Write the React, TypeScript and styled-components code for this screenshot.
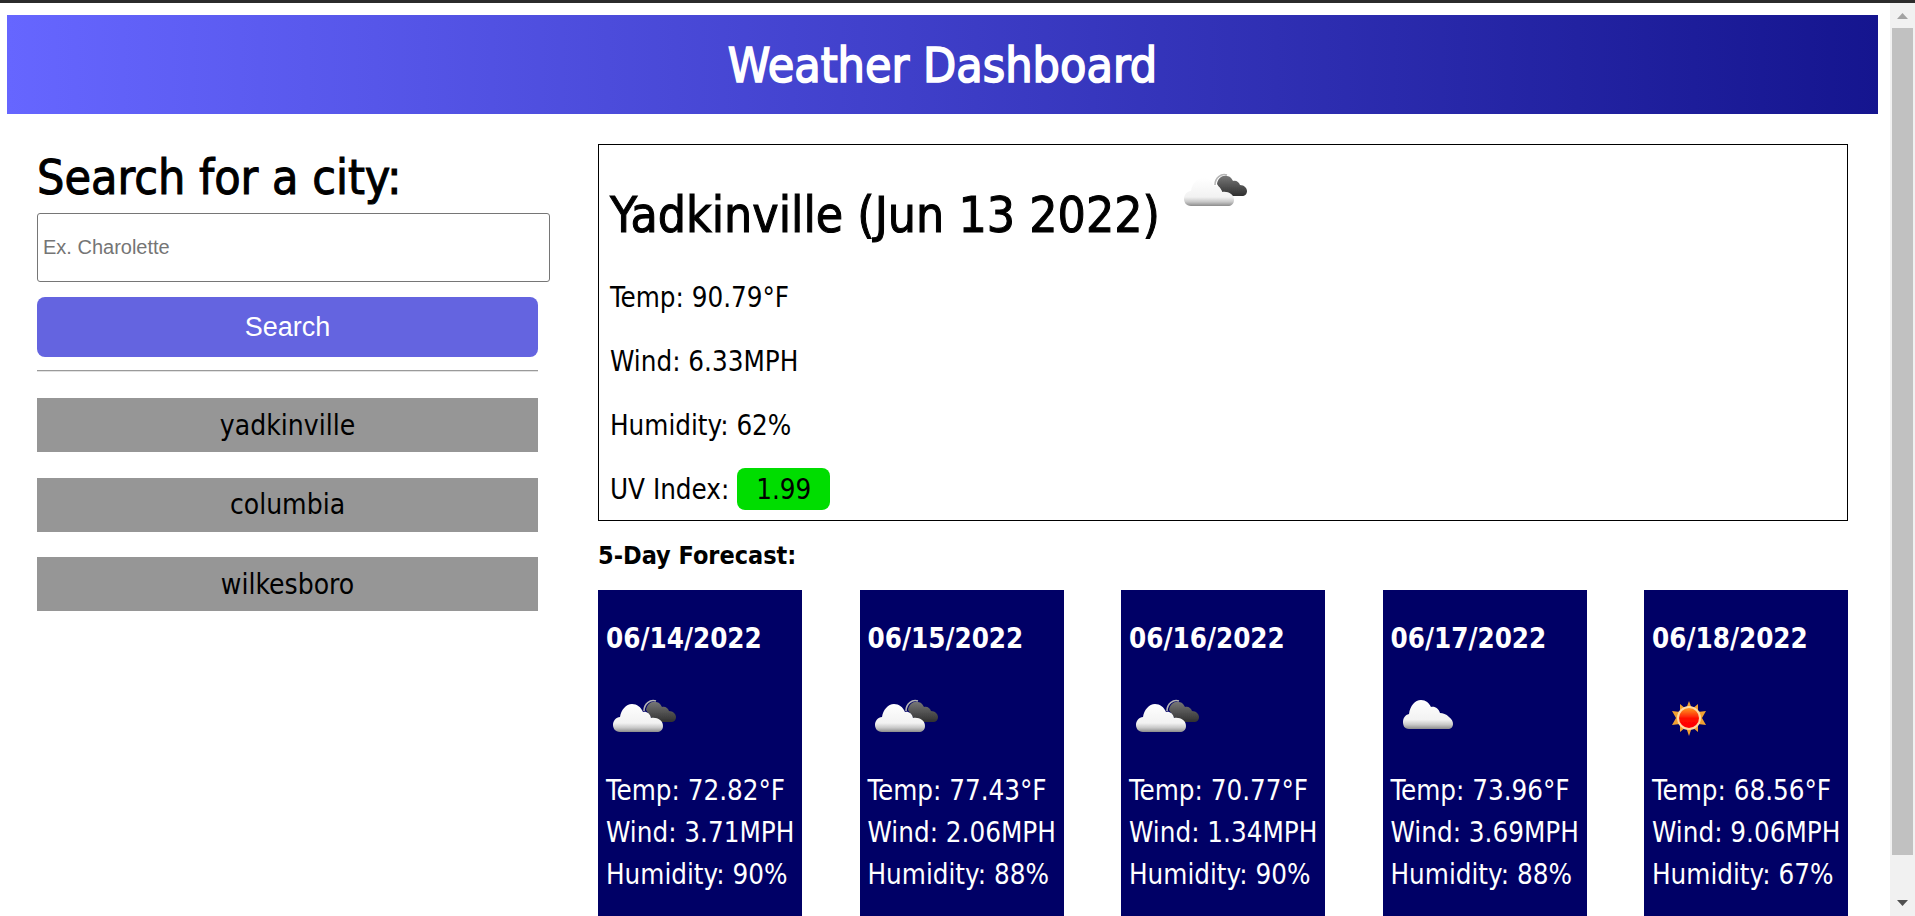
import React, { useId } from "react";
import styled, { createGlobalStyle } from "styled-components";

const Global = createGlobalStyle`
  html, body { margin: 0; padding: 0; height: 100%; overflow: hidden; background: #fff; }
  body { font-family: "DejaVu Sans Condensed", "DejaVu Sans", sans-serif; font-stretch: condensed; color: #000; }
  #root { height: 100%; }
`;

const Page = styled.div`
  height: 916px;
  display: flex;
  flex-direction: column;
  overflow: hidden;
  border-top: 3px solid #2b2b2b;
  box-sizing: border-box;
`;
const Row = styled.div`
  display: flex;
  flex: 1;
  min-height: 0;
`;
const Content = styled.div`
  width: 1890px;
  padding: 12px 0 0 7px;
  box-sizing: border-box;
  overflow: hidden;
  flex: none;
`;
const Header = styled.header`
  width: 1871px;
  height: 99px;
  background: linear-gradient(to right, #6666ff, #15158f);
  color: #fff;
  display: flex;
  align-items: center;
  justify-content: center;
  font-size: 48px;
  font-weight: 400;
  -webkit-text-stroke: 1.5px #fff;
`;
const Main = styled.div`
  display: flex;
  padding: 30px 0 0 30px;
`;
const Side = styled.aside`
  width: 513px;
  margin-right: 48px;
  flex: none;
`;
const SideTitle = styled.h2`
  margin: 9px 0 11px;
  font-size: 48px;
  font-weight: 400;
  line-height: 49px;
  -webkit-text-stroke: 1px #000;
`;
const Input = styled.input`
  display: block;
  width: 513px;
  height: 69px;
  box-sizing: border-box;
  border: 1px solid #767676;
  border-radius: 3px;
  padding: 0 5px;
  font: 20px "Liberation Sans", sans-serif;
  &::placeholder { color: #757575; }
`;
const SearchBtn = styled.button`
  display: block;
  width: 501px;
  height: 60px;
  margin-top: 15px;
  background: #6464e0;
  color: #fff;
  border: none;
  border-radius: 8px;
  font: 27px "Liberation Sans", sans-serif;
`;
const Rule = styled.hr`
  width: 501px;
  margin: 13px 0 26px;
  border: none;
  border-top: 1px solid #9a9a9a;
  border-bottom: 1px solid #e2e2e2;
`;
const CityBtn = styled.div`
  width: 501px;
  height: 54px;
  background: #969696;
  display: flex;
  align-items: center;
  justify-content: center;
  font-size: 28px;
  margin-bottom: 25.5px;
`;
const Right = styled.section`
  width: 1250px;
  flex: none;
`;
const Current = styled.div`
  height: 377px;
  box-sizing: border-box;
  border: 1px solid #000;
  padding: 0 11px;
`;
const City = styled.h2`
  margin: 0;
  height: 120px;
  box-sizing: border-box;
  padding-bottom: 20px;
  display: flex;
  align-items: flex-end;
  font-size: 49.5px;
  font-weight: 400;
  line-height: 60px;
  white-space: nowrap;
  -webkit-text-stroke: 1px #000;
`;
const CityIcon = styled.svg`
  width: 80px;
  height: 60px;
  margin: 0 0 31px 17px;
  flex: none;
`;
const Stat = styled.div`
  font-size: 27.5px;
  height: 64px;
  display: flex;
  align-items: center;
`;
const Uv = styled.span`
  display: inline-flex;
  align-items: center;
  justify-content: center;
  width: 93px;
  height: 42px;
  margin-left: 8px;
  background: #00dd00;
  border-radius: 8px;
`;
const ForecastTitle = styled.h4`
  margin: 21px 0 20px;
  font-size: 25px;
  font-weight: 700;
  line-height: 28px;
`;
const Cards = styled.div`
  display: flex;
  justify-content: space-between;
`;
const Card = styled.div`
  width: 204px;
  height: 400px;
  background: #000066;
  color: #fff;
  padding: 31px 8px 0;
  box-sizing: border-box;
  flex: none;
`;
const CardDate = styled.div`
  font-size: 27.5px;
  font-weight: 700;
  line-height: 34px;
`;
const CardIcon = styled.svg`
  display: block;
  width: 80px;
  height: 60px;
  margin: 25px 0 29px;
`;
const CardStat = styled.div`
  font-size: 27.5px;
  line-height: 42px;
  white-space: nowrap;
`;
const Scrollbar = styled.div`
  width: 25px;
  flex: none;
  background: #f1f1f1;
  display: flex;
  flex-direction: column;
  align-items: center;
`;
const ArrowBox = styled.svg`
  display: block;
  width: 11px;
  height: 6px;
  flex: none;
  margin: ${(p: { $m: string }) => p.$m};
`;
const Thumb = styled.div`
  width: 21px;
  height: 827px;
  background: #c1c1c1;
  flex: none;
`;

const WHITE =
  "M14 52C9 52 7 48 7 45C7 41 10 37 14 37C15 30 20 24 26 24C31 24 35 27 37 32C40 31 44 33 45 38C51 37 57 40 57 46C57 50 54 52 51 52Z";
const DARK =
  "M40 30C41 24 45 21 50 22C53 22 55 25 56 27C59 26 62 28 63 31C67 31 70 34 70 37C70 40 68 42 65 42L48 42Z";
const FEW =
  "M18 49C13 49 12 45 12 42C12 38 14 35 18 34C19 26 24 20 30 20C35 20 38 23 40 27C44 26 48 29 49 33C52 33 55 34 58 37C61 39 62 42 62 44C62 47 60 49 57 49Z";

const WeatherIcon = ({ kind, as: C }: { kind: string; as: any }) => {
  const id = useId().replace(/[^a-zA-Z0-9]/g, "");
  return (
    <C viewBox="0 0 80 60">
      <defs>
        <linearGradient id={`w${id}`} x1="0" y1="0" x2="0" y2="1">
          <stop offset="0" stopColor="#ffffff" />
          <stop offset="0.68" stopColor="#f2f2f2" />
          <stop offset="0.85" stopColor="#c8c8c8" />
          <stop offset="1" stopColor="#8c8c8c" />
        </linearGradient>
        <linearGradient id={`d${id}`} x1="0" y1="0" x2="0" y2="1">
          <stop offset="0" stopColor="#777777" />
          <stop offset="1" stopColor="#303030" />
        </linearGradient>
        <linearGradient id={`s${id}`} x1="0" y1="0" x2="0" y2="1">
          <stop offset="0" stopColor="#ff9a20" />
          <stop offset="0.55" stopColor="#ff0a00" />
          <stop offset="1" stopColor="#ff0000" />
        </linearGradient>
        <filter id={`b${id}`} x="-10%" y="-10%" width="120%" height="120%">
          <feGaussianBlur stdDeviation="0.5" />
        </filter>
      </defs>
      {kind === "sun" ? (
        <g filter={`url(#b${id})`}>
          <path
            d="M37 21l3 8 6-5 0 8 8-1-4 7 5 0-5 0 4 7-8-1 0 8-6-5-3 9-3-9-6 5 0-8-8 1 4-7-5 0 5 0-4-7 8 1 0-8 6 5z"
            fill="#f0a030"
          />
          <circle cx="37" cy="38" r="12" fill="#ffd9a0" />
          <circle cx="37" cy="38" r="10" fill={`url(#s${id})`} />
        </g>
      ) : kind === "few" ? (
        <path d={FEW} fill={`url(#w${id})`} filter={`url(#b${id})`} />
      ) : (
        <g filter={`url(#b${id})`}>
          <path d="M38 31C38 24 44 19 50 21" fill="none" stroke="#b5b5b5" strokeWidth="1.6" />
          <path d={DARK} fill={`url(#d${id})`} />
          <path d={WHITE} fill={`url(#w${id})`} />
        </g>
      )}
    </C>
  );
};

const days = [
  { d: "06/14/2022", k: "b", t: "72.82", w: "3.71", h: "90" },
  { d: "06/15/2022", k: "b", t: "77.43", w: "2.06", h: "88" },
  { d: "06/16/2022", k: "b", t: "70.77", w: "1.34", h: "90" },
  { d: "06/17/2022", k: "few", t: "73.96", w: "3.69", h: "88" },
  { d: "06/18/2022", k: "sun", t: "68.56", w: "9.06", h: "67" },
];

export default function App() {
  return (
    <Page>
      <Global />
      <Row>
        <Content>
          <Header>Weather Dashboard</Header>
          <Main>
            <Side>
              <SideTitle>Search for a city:</SideTitle>
              <Input placeholder="Ex. Charolette" />
              <SearchBtn>Search</SearchBtn>
              <Rule />
              <CityBtn>yadkinville</CityBtn>
              <CityBtn>columbia</CityBtn>
              <CityBtn>wilkesboro</CityBtn>
            </Side>
            <Right>
              <Current>
                <City>
                  Yadkinville (Jun 13 2022)
                  <WeatherIcon kind="c" as={CityIcon} />
                </City>
                <Stat>Temp: 90.79°F</Stat>
                <Stat>Wind: 6.33MPH</Stat>
                <Stat>Humidity: 62%</Stat>
                <Stat>
                  UV Index: <Uv>1.99</Uv>
                </Stat>
              </Current>
              <ForecastTitle>5-Day Forecast:</ForecastTitle>
              <Cards>
                {days.map((x) => (
                  <Card key={x.d}>
                    <CardDate>{x.d}</CardDate>
                    <WeatherIcon kind={x.k} as={CardIcon} />
                    <CardStat>Temp: {x.t}°F</CardStat>
                    <CardStat>Wind: {x.w}MPH</CardStat>
                    <CardStat>Humidity: {x.h}%</CardStat>
                  </Card>
                ))}
              </Cards>
            </Right>
          </Main>
        </Content>
        <Scrollbar>
          <ArrowBox $m="10px 0 9px" viewBox="0 0 11 6">
            <path d="M5.5 0L11 6H0Z" fill="#a3a3a3" />
          </ArrowBox>
          <Thumb />
          <ArrowBox $m="45px 0 0" viewBox="0 0 11 6">
            <path d="M0 0H11L5.5 6Z" fill="#505050" />
          </ArrowBox>
        </Scrollbar>
      </Row>
    </Page>
  );
}
